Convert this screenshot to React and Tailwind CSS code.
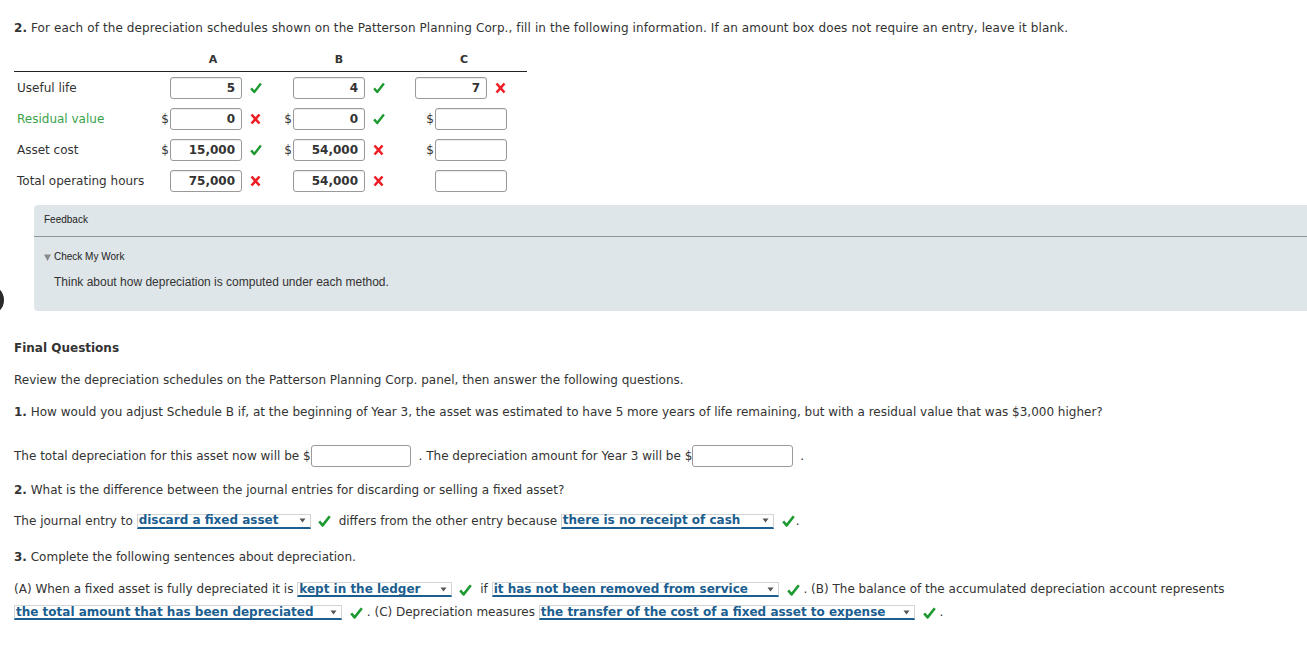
import React from 'react'

const font = "font-['DejaVu_Sans',Verdana,'Liberation_Sans',sans-serif]"

function Check({ className = '' }) {
  return (
    <svg width="13" height="12" viewBox="0 0 13 12" className={className}>
      <path d="M1.2 6.4 L4.6 10.4 L11.8 1.2" fill="none" stroke="#1f9a32" strokeWidth="2.6" strokeLinejoin="round" />
    </svg>
  )
}

function Cross({ className = '' }) {
  return (
    <svg width="11" height="12" viewBox="0 0 11 12" className={className}>
      <path d="M1.5 1.5 L9.5 10.5 M9.5 1.5 L1.5 10.5" fill="none" stroke="#ee1c24" strokeWidth="2.6" />
    </svg>
  )
}

function Box({ value, w = 'w-[72px]' }) {
  return (
    <div className={`${w} h-[22px] border border-[#9a9a9a] rounded-[3px] bg-white shadow-[inset_0_1px_1px_rgba(0,0,0,0.08)] flex items-center justify-end pr-[6px] font-bold text-[12px] text-[#333]`}>
      {value}
    </div>
  )
}

function Cell({ width, dollar, value, mark }) {
  return (
    <div className={`${width} h-[31px] flex items-center justify-end`}>
      {dollar && <span className="mr-[1px] text-[12px]">$</span>}
      <Box value={value} />
      {mark && (
        <div className="w-[20px] pl-[8px] flex items-center">
          {mark === 'ok' ? <Check /> : <Cross />}
        </div>
      )}
    </div>
  )
}

const rows = [
  { label: 'Useful life', cells: [{ value: '5', mark: 'ok' }, { value: '4', mark: 'ok' }, { value: '7', mark: 'bad' }] },
  { label: 'Residual value', green: true, cells: [{ dollar: true, value: '0', mark: 'bad' }, { dollar: true, value: '0', mark: 'ok' }, { dollar: true, value: '' }] },
  { label: 'Asset cost', cells: [{ dollar: true, value: '15,000', mark: 'ok' }, { dollar: true, value: '54,000', mark: 'bad' }, { dollar: true, value: '' }] },
  { label: 'Total operating hours', cells: [{ value: '75,000', mark: 'bad' }, { value: '54,000', mark: 'bad' }, { value: '' }] },
]

const colWidths = ['w-[102px]', 'w-[123px]', 'w-[122px]']

function Select({ text, w }) {
  return (
    <span className={`${w} inline-flex items-center justify-between h-[15px] bg-white border border-[#d4d4d4] border-b-[2px] border-b-[#1b5e8f] pl-[1px] pr-[4px] align-middle`}>
      <span className="font-bold text-[12px] leading-[13px] text-[#1b5e8f] whitespace-nowrap">{text}</span>
      <svg width="7" height="5" viewBox="0 0 7 5">
        <path d="M0.5 0.5 L6.5 0.5 L3.5 4.5 Z" fill="#555" />
      </svg>
    </span>
  )
}

export default function App() {
  return (
    <div className={`relative min-h-[649px] bg-white overflow-hidden ${font} text-[12px] text-[#333]`}>
      <div className="absolute left-[-26px] top-[285px] w-[30px] h-[30px] rounded-full bg-[#2a2a2a]" />

      <div className="pl-[14px]">
        <p className="pt-[20px] leading-[16px] whitespace-nowrap tracking-[0.1px]">
          <b>2.</b> For each of the depreciation schedules shown on the Patterson Planning Corp., fill in the following information. If an amount box does not require an entry, leave it blank.
        </p>

        <div className="w-[513px] mt-[14px]">
          <div className="flex h-[22px] items-center border-b border-[#222] font-bold text-[11px]">
            <div className="w-[146px]" />
            <div className="w-[106px] text-center">A</div>
            <div className="w-[146px] text-center">B</div>
            <div className="w-[104px] text-center">C</div>
          </div>
          {rows.map((r) => (
            <div key={r.label} className="flex">
              <div className={`w-[146px] h-[31px] flex items-center pl-[3px] ${r.green ? 'text-[#3aa349]' : ''}`}>{r.label}</div>
              {r.cells.map((c, i) => (
                <Cell key={i} width={colWidths[i]} {...c} />
              ))}
            </div>
          ))}
        </div>
      </div>

      <div className="ml-[34px] mt-[9px] h-[106px] bg-[#dfe6e9] rounded-l-[4px] font-['Liberation_Sans',Arial,sans-serif]">
        <div className="h-[32px] border-b border-[#8d979b] pl-[10px] pt-[9px] text-[10px] leading-[12px] text-[#222]">Feedback</div>
        <div className="pl-[10px] pt-[14px] flex items-center text-[10px] leading-[12px] text-[#222]">
          <svg width="7" height="7" viewBox="0 0 7 7" className="mr-[3px]">
            <path d="M0 0.5 L7 0.5 L3.5 7 Z" fill="#8a8a8a" />
          </svg>
          Check My Work
        </div>
        <p className="pl-[20px] pt-[12px] text-[12px] leading-[14px] text-[#333]">Think about how depreciation is computed under each method.</p>
      </div>

      <div className="pl-[14px]">
        <p className="mt-[29px] font-bold leading-[16px]">Final Questions</p>
        <p className="mt-[16px] leading-[16px]">Review the depreciation schedules on the Patterson Planning Corp. panel, then answer the following questions.</p>
        <p className="mt-[16px] leading-[16px] whitespace-nowrap">
          <b>1.</b> How would you adjust Schedule B if, at the beginning of Year 3, the asset was estimated to have 5 more years of life remaining, but with a residual value that was $3,000 higher?
        </p>

        <div className="mt-[25px] flex items-center h-[22px] whitespace-nowrap">
          <span>The total depreciation for this asset now will be $</span>
          <div className="w-[100px] h-[22px] border border-[#9a9a9a] rounded-[3px] bg-white" />
          <span className="ml-[8px]">. The depreciation amount for Year 3 will be $</span>
          <div className="w-[101px] h-[22px] border border-[#9a9a9a] rounded-[3px] bg-white" />
          <span className="ml-[7px]">.</span>
        </div>

        <p className="mt-[15px] leading-[16px]">
          <b>2.</b> What is the difference between the journal entries for discarding or selling a fixed asset?
        </p>

        <div className="mt-[13px] flex items-center h-[20px] whitespace-nowrap">
          <span>The journal entry to&nbsp;</span>
          <Select text="discard a fixed asset" w="w-[174px]" />
          <Check className="ml-[7px] mr-[8px]" />
          <span>differs from the other entry because&nbsp;</span>
          <Select text="there is no receipt of cash" w="w-[213px]" />
          <Check className="ml-[8px]" />
          <span className="ml-[1px]">.</span>
        </div>

        <p className="mt-[18px] leading-[16px]">
          <b>3.</b> Complete the following sentences about depreciation.
        </p>

        <div className="mt-[13px] leading-[23px]">
          <div className="flex items-center h-[23px] whitespace-nowrap">
            <span>(A) When a fixed asset is fully depreciated it is&nbsp;</span>
            <Select text="kept in the ledger" w="w-[155px]" />
            <Check className="ml-[7px] mr-[8px]" />
            <span>if&nbsp;</span>
            <Select text="it has not been removed from service" w="w-[287px]" />
            <Check className="ml-[8px]" />
            <span>&nbsp;. (B) The balance of the accumulated depreciation account represents</span>
          </div>
          <div className="flex items-center h-[23px] whitespace-nowrap">
            <Select text="the total amount that has been depreciated" w="w-[328px]" />
            <Check className="ml-[8px]" />
            <span>&nbsp;. (C) Depreciation measures&nbsp;</span>
            <Select text="the transfer of the cost of a fixed asset to expense" w="w-[376px]" />
            <Check className="ml-[8px]" />
            <span>&nbsp;.</span>
          </div>
        </div>
      </div>
    </div>
  )
}
